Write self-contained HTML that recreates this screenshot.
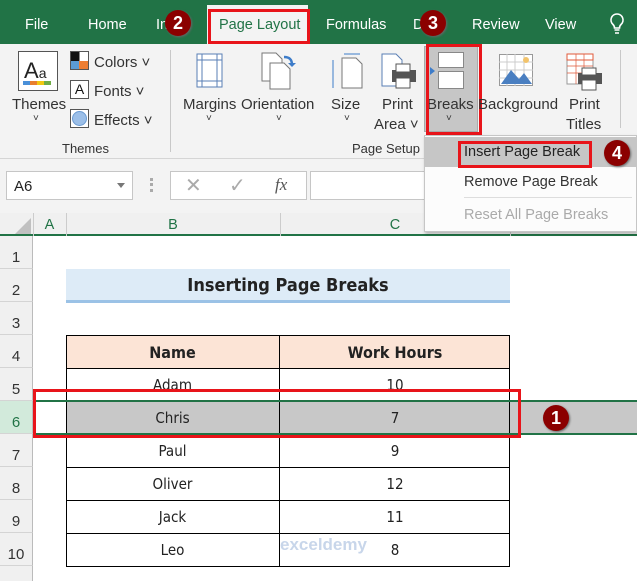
<!DOCTYPE html>
<html><head><meta charset="utf-8"><style>
*{margin:0;padding:0;box-sizing:border-box}
body{width:637px;height:581px;overflow:hidden;position:relative;background:#fff;font-family:"Liberation Sans",sans-serif;color:#222}
.a{position:absolute}
.tab{position:absolute;top:17px;color:#fff;font-size:14.5px}
.rl{position:absolute;font-size:14.5px;color:#333;text-align:center}
.badge{position:absolute;width:26px;height:26px;border-radius:50%;background:#8b0000;color:#fff;font-weight:bold;font-size:18px;text-align:center;line-height:26px;box-shadow:1px 1px 2px #666}
.red{position:absolute;border:3px solid #e8141a}
.rh{position:absolute;left:0;width:33px;background:#f0f0f0;border-bottom:1px solid #d4d4d4;color:#333;font-size:15px;text-align:center;border-right:1px solid #bbb}
.cell{position:absolute;font-family:"DejaVu Sans Condensed","Liberation Sans Narrow","Liberation Sans",sans-serif;font-size:15px;text-align:center}
</style></head><body>
<div class="a" style="left:0;top:0;width:637px;height:44px;background:#217346"></div>
<div class="tab" style="left:25px">File</div>
<div class="tab" style="left:88px">Home</div>
<div class="tab" style="left:156px">In</div>
<div class="a" style="left:207px;top:5px;width:101px;height:39px;background:#f3f3f3"></div>
<div class="tab" style="left:219px;color:#217346">Page Layout</div>
<div class="tab" style="left:326px">Formulas</div>
<div class="tab" style="left:413px">D</div>
<div class="tab" style="left:472px">Review</div>
<div class="tab" style="left:545px">View</div>
<svg class="a" style="left:608px;top:12px" width="18" height="24"><path d="M9 2a6 6 0 0 0-4 10.5c1 1 1.5 2 1.5 3.5h5c0-1.5.5-2.5 1.5-3.5A6 6 0 0 0 9 2zM6.5 18h5M7 21h4" stroke="#fff" stroke-width="1.6" fill="none"/></svg>
<div class="red" style="left:208px;top:9px;width:102px;height:35px"></div>
<div class="badge" style="left:165px;top:10px">2</div>
<div class="badge" style="left:420px;top:10px">3</div>
<div class="a" style="left:0;top:44px;width:637px;height:115px;background:#f3f3f3;border-bottom:1px solid #d5d5d5"></div>
<div class="a" style="left:18px;top:51px;width:40px;height:40px;border:1px solid #555;background:#fff;font-size:22px;padding:6px 0 0 5px">A<span style="font-size:14px">a</span></div>
<div class="a" style="left:23px;top:81px;width:28px;height:4px;background:linear-gradient(90deg,#4a90d9 25%,#e87f2e 25% 50%,#f2c811 50% 75%,#70ad47 75%)"></div>
<div class="rl" style="left:12px;top:96px;font-size:15px">Themes</div>
<div class="rl" style="left:33px;top:113px;font-size:10px">˅</div>
<div class="a" style="left:70px;top:51px;width:19px;height:19px;background:linear-gradient(90deg,#111 50%,#fff 50%);border:1px solid #555"><div style="position:absolute;top:9px;left:0;width:8px;height:8px;background:#5b9bd5"></div><div style="position:absolute;top:9px;left:8px;width:9px;height:8px;background:#ed7d31"></div></div>
<div class="rl" style="left:94px;top:54px;font-size:15px">Colors ˅</div>
<div class="a" style="left:70px;top:80px;width:19px;height:19px;border:1px solid #555;background:#fff;font-size:14px;text-align:center;color:#111">A</div>
<div class="rl" style="left:94px;top:83px;font-size:15px">Fonts ˅</div>
<div class="a" style="left:70px;top:109px;width:19px;height:19px;border:1px solid #555;background:#fff"><div style="margin:1px;width:15px;height:15px;border-radius:50%;background:#9cbfe8;border:1px solid #6b9bd2"></div></div>
<div class="rl" style="left:94px;top:112px;font-size:15px">Effects ˅</div>
<div class="rl" style="left:62px;top:141px;font-size:13px">Themes</div>
<div class="a" style="left:170px;top:50px;width:1px;height:102px;background:#c8c8c8"></div>
<svg class="a" style="left:196px;top:53px" width="28" height="36"><rect x="1" y="1" width="25" height="33" fill="#fff" stroke="#5a7fb5"/><path d="M6 1v33M21 1v33M1 7h25M1 28h25" stroke="#5a7fb5"/></svg>
<div class="rl" style="left:183px;top:96px;font-size:15px">Margins</div><div class="rl" style="left:206px;top:113px;font-size:10px">˅</div>
<svg class="a" style="left:260px;top:51px" width="38" height="40"><path d="M2 2h14l6 6v22H2z" fill="#fff" stroke="#777"/><path d="M10 12h14l6 6v20H10z" fill="#fff" stroke="#777"/><path d="M24 6c6 0 8 3 8 8" stroke="#3d7cc9" stroke-width="2.5" fill="none"/><path d="M28 12l4 4 4-4" fill="#3d7cc9"/></svg>
<div class="rl" style="left:241px;top:96px;font-size:15px">Orientation</div><div class="rl" style="left:276px;top:113px;font-size:10px">˅</div>
<svg class="a" style="left:330px;top:52px" width="34" height="38"><path d="M12 6h14l6 6v24H12z" fill="#fff" stroke="#777"/><path d="M14 2h16M3 8v28" stroke="#3d7cc9"/></svg>
<div class="rl" style="left:331px;top:96px;font-size:15px">Size</div><div class="rl" style="left:344px;top:113px;font-size:10px">˅</div>
<svg class="a" style="left:380px;top:52px" width="38" height="40"><path d="M2 2h14l6 6v26H2z" fill="#fff" stroke="#5a7fb5"/><rect x="12" y="18" width="24" height="12" fill="#555"/><rect x="16" y="12" width="14" height="8" fill="#fff" stroke="#555"/><rect x="16" y="26" width="14" height="10" fill="#fff" stroke="#555"/></svg>
<div class="rl" style="left:382px;top:96px;font-size:15px">Print</div>
<div class="rl" style="left:374px;top:116px;font-size:15px">Area ˅</div>
<div class="rl" style="left:352px;top:141px;font-size:13px">Page Setup</div>
<div class="a" style="left:424px;top:46px;width:54px;height:86px;background:#c6c6c6;border:1px solid #aaa"></div>
<div class="a" style="left:438px;top:52px;width:26px;height:16px;background:#fff;border:1px solid #888"></div>
<div class="a" style="left:438px;top:71px;width:26px;height:18px;background:#fff;border:1px solid #888"></div>
<div class="a" style="left:430px;top:67px;width:0;height:0;border-left:5px solid #3d7cc9;border-top:4px solid transparent;border-bottom:4px solid transparent"></div>
<div class="rl" style="left:427px;top:96px;font-size:15px">Breaks</div><div class="rl" style="left:446px;top:113px;font-size:10px">˅</div>
<div class="red" style="left:426px;top:44px;width:56px;height:91px"></div>
<svg class="a" style="left:499px;top:54px" width="35" height="34"><rect x="0.5" y="0.5" width="33" height="31" fill="#fff" stroke="#999"/><path d="M0 8h34M0 16h34M0 24h34M8 0v32M16 0v32M25 0v32" stroke="#ccc"/><circle cx="27" cy="6" r="3" fill="#f2c36b"/><path d="M2 30l10-14 8 9 5-6 8 11z" fill="#4a7fc1"/></svg>
<div class="rl" style="left:478px;top:96px;font-size:15px">Background</div>
<svg class="a" style="left:566px;top:53px" width="38" height="40"><rect x="1" y="1" width="26" height="30" fill="#fff" stroke="#999"/><path d="M1 1h26v6H1z" fill="none" stroke="#e05a3a"/><path d="M10 1v30M18 1v30M1 13h26M1 20h26" stroke="#e05a3a" stroke-width=".7"/><rect x="12" y="20" width="24" height="11" fill="#555"/><rect x="16" y="15" width="14" height="7" fill="#fff" stroke="#555"/><rect x="16" y="27" width="14" height="10" fill="#fff" stroke="#555"/></svg>
<div class="rl" style="left:569px;top:96px;font-size:15px">Print</div>
<div class="rl" style="left:566px;top:116px;font-size:15px">Titles</div>
<div class="a" style="left:620px;top:50px;width:1px;height:78px;background:#c8c8c8"></div>
<div class="a" style="left:0;top:159px;width:637px;height:54px;background:#f3f3f3"></div>
<div class="a" style="left:6px;top:171px;width:127px;height:29px;background:#fff;border:1px solid #c6c6c6;font-size:15px;padding:6px 0 0 7px">A6<span style="position:absolute;right:7px;top:11px;border-top:5px solid #777;border-left:4px solid transparent;border-right:4px solid transparent"></span></div>
<div class="a" style="left:150px;top:178px;width:3px;height:14px;border-left:3px dotted #aaa"></div>
<div class="a" style="left:170px;top:171px;width:137px;height:29px;background:#fff;border:1px solid #c6c6c6;color:#aaa;font-size:20px"><span style="position:absolute;left:14px;top:1px">✕</span><span style="position:absolute;left:58px;top:1px">✓</span><span style="position:absolute;left:104px;top:3px;color:#555;font-style:italic;font-family:'Liberation Serif',serif;font-size:17px">fx</span></div>
<div class="a" style="left:310px;top:171px;width:120px;height:29px;background:#fff;border:1px solid #c6c6c6"></div>
<div class="a" style="left:0;top:213px;width:637px;height:23px;background:#f0f0f0;border-bottom:2px solid #217346"></div>
<div class="a" style="left:15px;top:218px;width:0;height:0;border-left:16px solid transparent;border-bottom:16px solid #c0c0c0"></div>
<div class="a" style="left:33px;top:213px;width:1px;height:23px;background:#ccc"></div>
<div class="a" style="left:66px;top:213px;width:1px;height:23px;background:#ccc"></div>
<div class="a" style="left:280px;top:213px;width:1px;height:23px;background:#ccc"></div>
<div class="a" style="left:510px;top:213px;width:1px;height:23px;background:#ccc"></div>
<div class="rl" style="left:33px;width:33px;top:217px;color:#217346">A</div>
<div class="rl" style="left:66px;width:214px;top:217px;color:#217346">B</div>
<div class="rl" style="left:280px;width:230px;top:217px;color:#217346">C</div>
<div class="a" style="left:424px;top:135px;width:213px;height:97px;background:#fcfcfc;border:1px solid #c6c6c6;box-shadow:1px 2px 3px rgba(0,0,0,.25)"></div>
<div class="a" style="left:425px;top:137px;width:212px;height:30px;background:#c6c6c6"></div>
<div class="rl" style="left:464px;top:144px;color:#222">Insert Page Break</div>
<div class="red" style="left:458px;top:141px;width:134px;height:27px"></div>
<div class="badge" style="left:604px;top:140px">4</div>
<div class="rl" style="left:464px;top:174px;color:#333">Remove Page Break</div>
<div class="a" style="left:464px;top:197px;width:168px;height:1px;background:#ddd"></div>
<div class="rl" style="left:464px;top:207px;color:#aaa">Reset All Page Breaks</div>
<div class="a" style="left:0;top:236px;width:33px;height:345px;background:#f0f0f0;border-right:1px solid #bbb"></div>
<div class="rh" style="top:236px;height:33px;line-height:44px">1</div>
<div class="rh" style="top:269px;height:33px;line-height:44px">2</div>
<div class="rh" style="top:302px;height:33px;line-height:44px">3</div>
<div class="rh" style="top:335px;height:33px;line-height:44px">4</div>
<div class="rh" style="top:368px;height:33px;line-height:44px">5</div>
<div class="rh" style="top:401px;height:33px;line-height:44px;background:#d2eadb;color:#217346">6</div>
<div class="rh" style="top:434px;height:33px;line-height:44px">7</div>
<div class="rh" style="top:467px;height:33px;line-height:44px">8</div>
<div class="rh" style="top:500px;height:33px;line-height:44px">9</div>
<div class="rh" style="top:533px;height:33px;line-height:44px">10</div>
<div class="a" style="left:66px;top:269px;width:444px;height:34px;background:#ddebf7;border-bottom:3px solid #9bc2e6"></div>
<div class="cell" style="left:66px;top:275px;width:444px;font-weight:bold;font-size:18px">Inserting Page Breaks</div>
<div class="a" style="left:66px;top:335px;width:444px;height:33px;background:#fce4d6"></div>
<div class="a" style="left:66px;top:401px;width:571px;height:33px;background:#c8c8c8"></div>
<div class="a" style="left:66px;top:335px;width:444px;height:232px;border:1px solid #000"></div>
<div class="a" style="left:279px;top:335px;width:1px;height:232px;background:#000"></div>
<div class="a" style="left:66px;top:368px;width:444px;height:1px;background:#000"></div>
<div class="a" style="left:66px;top:434px;width:444px;height:1px;background:#000"></div>
<div class="a" style="left:66px;top:467px;width:444px;height:1px;background:#000"></div>
<div class="a" style="left:66px;top:500px;width:444px;height:1px;background:#000"></div>
<div class="a" style="left:66px;top:533px;width:444px;height:1px;background:#000"></div>
<div class="cell" style="left:66px;width:213px;top:343px;font-weight:bold;font-size:16px">Name</div>
<div class="cell" style="left:280px;width:230px;top:343px;font-weight:bold;font-size:16px">Work Hours</div>
<div class="cell" style="left:66px;width:213px;top:376px">Adam</div><div class="cell" style="left:280px;width:230px;top:376px">10</div>
<div class="cell" style="left:66px;width:213px;top:409px">Chris</div><div class="cell" style="left:280px;width:230px;top:409px">7</div>
<div class="cell" style="left:66px;width:213px;top:442px">Paul</div><div class="cell" style="left:280px;width:230px;top:442px">9</div>
<div class="cell" style="left:66px;width:213px;top:475px">Oliver</div><div class="cell" style="left:280px;width:230px;top:475px">12</div>
<div class="cell" style="left:66px;width:213px;top:508px">Jack</div><div class="cell" style="left:280px;width:230px;top:508px">11</div>
<div class="cell" style="left:66px;width:213px;top:541px">Leo</div><div class="cell" style="left:280px;width:230px;top:541px">8</div>
<div class="a" style="left:33px;top:400px;width:604px;height:2px;background:#217346"></div>
<div class="a" style="left:36px;top:433px;width:601px;height:2px;background:#217346"></div>
<div class="red" style="left:33px;top:389px;width:488px;height:49px"></div>
<div class="badge" style="left:543px;top:405px">1</div>
<div class="a" style="left:280px;top:535px;font-size:17px;color:#c8d6ea;font-weight:bold">exceldemy</div>
</body></html>
